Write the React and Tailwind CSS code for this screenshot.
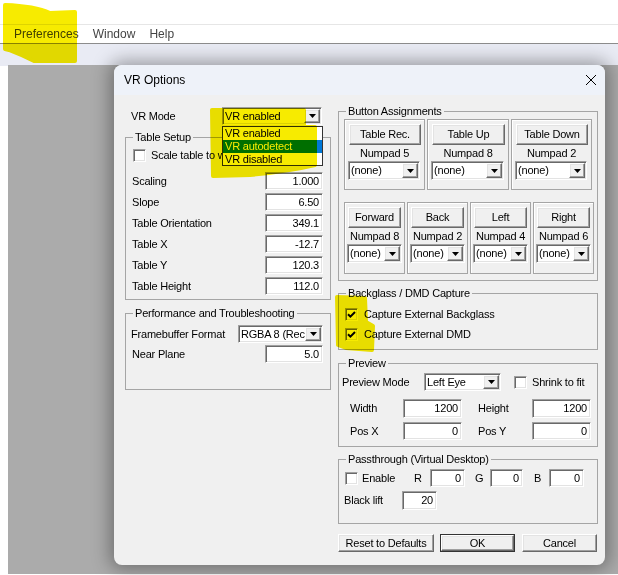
import React from 'react';

const sunken =
  'bg-white border border-t-[#a0a0a0] border-l-[#a0a0a0] border-r-white border-b-white shadow-[inset_1px_1px_0_#696969,inset_-1px_-1px_0_#e3e3e3]';
const raised =
  'bg-[#f0f0f0] border border-t-white border-l-white border-r-[#696969] border-b-[#696969] shadow-[inset_-1px_-1px_0_#a0a0a0,inset_1px_1px_0_#e3e3e3]';

const Arrow = () => (
  <span className={`${raised} my-[1px] mr-[1px] w-[16px] flex items-center justify-center shrink-0`}>
    <svg width="7" height="4" viewBox="0 0 7 4">
      <path d="M0 0H7L3.5 4Z" fill="#000" />
    </svg>
  </span>
);

const Field = ({ value, className = '' }) => (
  <div className={`${sunken} h-[18px] flex items-center justify-end pr-[3px] ${className}`}>{value}</div>
);

const Select = ({ value, className = '' }) => (
  <div className={`${sunken} h-[18px] flex items-stretch ${className}`}>
    <span className="flex-1 pl-[2px] flex items-center overflow-hidden whitespace-nowrap">{value}</span>
    <Arrow />
  </div>
);

const Check = ({ checked }) => (
  <span className={`${sunken} w-[13px] h-[13px] shrink-0 flex items-center justify-center`}>
    {checked && (
      <svg width="9" height="9" viewBox="0 0 9 9">
        <path d="M1 4.2L3.4 6.6L8 2" fill="none" stroke="#000" strokeWidth="2" />
      </svg>
    )}
  </span>
);

const Group = ({ title, className = '', children }) => (
  <fieldset className={`border border-[#a5a5a5] ${className}`}>
    <legend className="ml-[7px] px-[2px] leading-[13px]">{title}</legend>
    {children}
  </fieldset>
);

const Row = ({ label, value }) => (
  <div className="mt-[3px] h-[18px] flex items-center justify-between pl-[6px] pr-[7px]">
    <span>{label}</span>
    <Field value={value} className="w-[58px]" />
  </div>
);

const Assign = ({ name, keyName, wide, className = '' }) => (
  <div className={`border border-[#a5a5a5] shadow-[inset_1px_1px_0_#fff] flex flex-col px-[3px] ${className}`}>
    <button className={`${raised} mt-[4px] h-[21px] ${wide ? 'ml-[1px]' : ''}`}>{name}</button>
    <div className="h-[16px] flex items-center justify-center">{keyName}</div>
    <Select value="(none)" className={wide ? 'h-[19px] mr-[1px]' : 'h-[19px] -mx-[1px]'} />
  </div>
);

export default function App() {
  return (
    <div className="relative isolate w-[618px] h-[575px] overflow-hidden bg-white font-['Liberation_Sans',Arial,sans-serif] text-black">
      {/* menu area */}
      <div className="h-[25px] border-b border-[#e6e6e6]" />
      <div className="h-[19px] flex items-center gap-[14px] pl-[14px] text-[12px] text-[#444] border-b border-[#8c8c8c]">
        <span>Preferences</span>
        <span>Window</span>
        <span>Help</span>
      </div>
      <div className="h-[22px] bg-[#e9ebf4]" />

      {/* desktop */}
      <div className="ml-[8px] h-[509px] bg-[#ababab] pl-[106px]">
        <div className="-mt-[1px] w-[491px] h-[500px] rounded-[8px] overflow-hidden bg-[#f0f0f0] shadow-[0_0_18px_4px_rgba(0,0,0,0.35)] text-[11px] leading-[13px] tracking-[-0.2px]">
          {/* title bar */}
          <div className="h-[30px] bg-[#eef2f9] flex items-center justify-between pl-[10px] pr-[8px]">
            <span className="text-[12px] tracking-normal">VR Options</span>
            <svg width="12" height="12" viewBox="0 0 12 12">
              <path d="M1 1L11 11M11 1L1 11" stroke="#000" strokeWidth="1" />
            </svg>
          </div>

          {/* body */}
          <div className="flex pl-[11px] gap-[7px]">
            {/* left column */}
            <div className="w-[206px] flex flex-col">
              <div className="mt-[12px] h-[18px] flex items-center">
                <span className="w-[97px] pl-[6px]">VR Mode</span>
                <div className="relative">
                  <Select value="VR enabled" className="w-[100px]" />
                  <div className="absolute left-0 top-[19px] w-[101px] bg-white border border-[#333] z-10">
                    <div className="h-[13px] pl-[2px] flex items-center">VR enabled</div>
                    <div className="h-[13px] pl-[2px] flex items-center bg-[#0078d7] text-white">VR autodetect</div>
                    <div className="h-[12px] pl-[2px] flex items-center">VR disabled</div>
                  </div>
                </div>
              </div>

              <Group title="Table Setup" className="mt-[6px] h-[169px]">
                <div className="mt-[5px] h-[13px] pl-[7px] flex items-center gap-[5px] whitespace-nowrap">
                  <Check />
                  <span>Scale table to world</span>
                </div>
                <div className="h-[7px]" />
                <Row label="Scaling" value="1.000" />
                <Row label="Slope" value="6.50" />
                <Row label="Table Orientation" value="349.1" />
                <Row label="Table X" value="-12.7" />
                <Row label="Table Y" value="120.3" />
                <Row label="Table Height" value="112.0" />
              </Group>

              <Group title="Performance and Troubleshooting" className="mt-[7px] h-[83px]">
                <div className="mt-[5px] h-[18px] flex items-center justify-between pl-[5px] pr-[7px]">
                  <span>Framebuffer Format</span>
                  <Select value="RGBA 8 (Rec" className="w-[85px]" />
                </div>
                <div className="mt-[2px] h-[18px] flex items-center justify-between pl-[6px] pr-[7px]">
                  <span>Near Plane</span>
                  <Field value="5.0" className="w-[58px]" />
                </div>
              </Group>
            </div>

            {/* right column */}
            <div className="w-[260px] flex flex-col">
              <Group title="Button Assignments" className="mt-[10px] h-[176px]">
                <div className="mt-[1px] pl-[5px] flex gap-[2px]">
                  <Assign name="Table Rec." keyName="Numpad 5" wide className="w-[81px] h-[71px]" />
                  <Assign name="Table Up" keyName="Numpad 8" wide className="w-[82px] h-[71px]" />
                  <Assign name="Table Down" keyName="Numpad 2" wide className="w-[81px] h-[71px]" />
                </div>
                <div className="mt-[12px] pl-[5px] flex gap-[2px]">
                  <Assign name="Forward" keyName="Numpad 8" className="w-[61px] h-[72px]" />
                  <Assign name="Back" keyName="Numpad 2" className="w-[61px] h-[72px]" />
                  <Assign name="Left" keyName="Numpad 4" className="w-[61px] h-[72px]" />
                  <Assign name="Right" keyName="Numpad 6" className="w-[61px] h-[72px]" />
                </div>
              </Group>

              <Group title="Backglass / DMD Capture" className="mt-[6px] h-[63px]">
                <div className="mt-[8px] h-[13px] pl-[6px] flex items-center gap-[6px]">
                  <Check checked />
                  <span>Capture External Backglass</span>
                </div>
                <div className="mt-[7px] h-[13px] pl-[6px] flex items-center gap-[6px]">
                  <Check checked />
                  <span>Capture External DMD</span>
                </div>
              </Group>

              <Group title="Preview" className="mt-[7px] h-[90px]">
                <div className="mt-[3px] h-[18px] pl-[3px] flex items-center">
                  <span className="w-[82px]">Preview Mode</span>
                  <Select value="Left Eye" className="w-[77px]" />
                  <span className="ml-[13px]"><Check /></span>
                  <span className="ml-[5px]">Shrink to fit</span>
                </div>
                <div className="mt-[8px] h-[19px] pl-[11px] flex items-center">
                  <span className="w-[53px]">Width</span>
                  <Field value="1200" className="w-[59px] h-[19px]" />
                  <span className="ml-[16px] w-[54px]">Height</span>
                  <Field value="1200" className="w-[59px] h-[19px]" />
                </div>
                <div className="mt-[4px] h-[18px] pl-[11px] flex items-center">
                  <span className="w-[53px]">Pos X</span>
                  <Field value="0" className="w-[59px]" />
                  <span className="ml-[16px] w-[54px]">Pos Y</span>
                  <Field value="0" className="w-[59px]" />
                </div>
              </Group>

              <Group title="Passthrough (Virtual Desktop)" className="mt-[6px] h-[71px]">
                <div className="mt-[3px] h-[18px] pl-[6px] flex items-center">
                  <Check />
                  <span className="ml-[4px] w-[52px]">Enable</span>
                  <span className="w-[16px]">R</span>
                  <Field value="0" className="w-[35px]" />
                  <span className="ml-[10px] w-[15px]">G</span>
                  <Field value="0" className="w-[33px]" />
                  <span className="ml-[11px] w-[15px]">B</span>
                  <Field value="0" className="w-[35px]" />
                </div>
                <div className="mt-[4px] h-[19px] pl-[5px] flex items-center">
                  <span className="w-[58px]">Black lift</span>
                  <Field value="20" className="w-[35px] h-[19px]" />
                </div>
              </Group>

              <div className="mt-[10px] flex">
                <button className={`${raised} w-[96px] h-[18px]`}>Reset to Defaults</button>
                <div className="ml-[6px] w-[75px] h-[18px] border border-[#333] flex">
                  <button className={`${raised} flex-1`}>OK</button>
                </div>
                <button className={`${raised} ml-[7px] w-[75px] h-[18px]`}>Cancel</button>
              </div>
            </div>
          </div>
        </div>
      </div>

      {/* highlighter marks */}
      <svg
        className="absolute left-0 top-0 z-20 pointer-events-none mix-blend-multiply"
        width="618"
        height="575"
        viewBox="0 0 618 575"
      >
        <g fill="#f7eb00" stroke="#f7eb00" strokeWidth="4" strokeLinejoin="round">
          <path d="M5 5Q35 6 50 13L75 12L75 61L34 61Q22 55 9 50L5 49Z" />
          <path d="M212 110L304 110L304 127L315 127L315 165Q290 171 250 175L213 176Z" />
          <path d="M337 297L365 298L366 322L373 326L372 350L346 348L338 345Z" />
        </g>
      </svg>
    </div>
  );
}
